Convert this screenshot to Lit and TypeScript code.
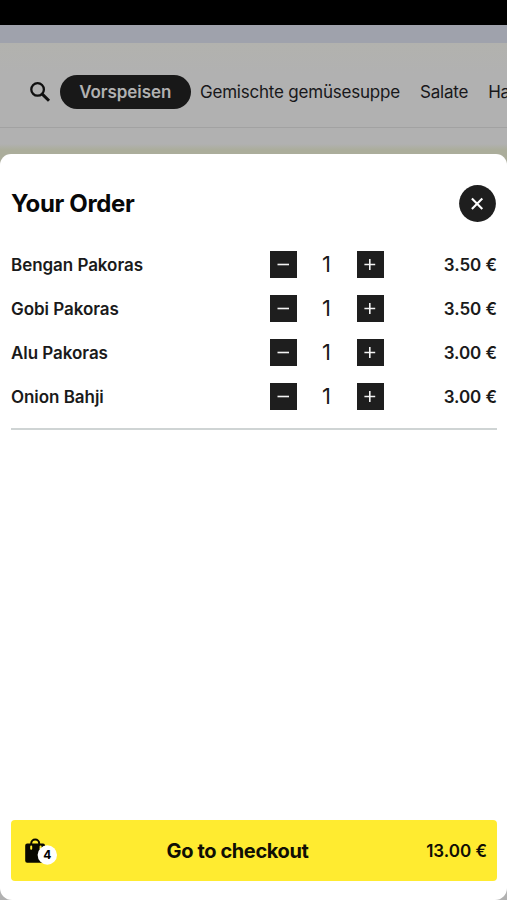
import { LitElement, html, css, svg } from "lit";
import { customElement, property } from "lit/decorators.js";

interface OrderItem {
  name: string;
  count: number;
  price: string;
}

@customElement("category-bar")
export class CategoryBar extends LitElement {
  static styles = css`
    :host {
      display: flex;
      align-items: center;
      box-sizing: border-box;
      height: 85px;
      padding: 14px 0 0 29px;
      overflow: hidden;
      white-space: nowrap;
    }
    .search {
      display: block;
      flex: none;
      width: 22px;
      height: 22px;
      margin-right: 9px;
    }
    .tab {
      flex: none;
      box-sizing: border-box;
      height: 34px;
      padding-top: 1px;
      font-size: 17px;
      line-height: 33px;
      letter-spacing: -0.21px;
      margin-left: 20px;
      color: #18181a;
    }
    .active {
      margin: 0;
      width: 130.500px;
      text-align: center;
      border-radius: 17px;
      background: #181818;
      color: #b1b1b1;
      font-weight: 600;
      letter-spacing: -0.08px;
    }
    .active + .tab {
      margin-left: 9.500px;
    }
  `;

  render() {
    return html`
      <svg class="search" viewBox="0 0 22 22" fill="none" stroke="#101010">
        <circle cx="8.6" cy="8.4" r="6.3" stroke-width="2.3" />
        <path d="M13 12.9 L20 19.8" stroke-width="3" />
      </svg>
      <div class="tab active">Vorspeisen</div>
      <div class="tab">Gemischte gemüsesuppe</div>
      <div class="tab">Salate</div>
      <div class="tab">Hauptgerichte</div>
    `;
  }
}

@customElement("order-row")
export class OrderRow extends LitElement {
  @property({ attribute: false }) item!: OrderItem;

  static styles = css`
    :host {
      display: grid;
      grid-template-columns: 258.5px 27px 60px 27px 1fr;
      align-items: center;
      height: 44px;
      font-size: 17px;
      font-weight: 600;
      letter-spacing: -0.05px;
      color: #1a1a1a;
    }
    .step {
      display: block;
      width: 27px;
      height: 27px;
      background: #1e1e1e;
    }
    .count {
      font-size: 22px;
      font-weight: 400;
      text-align: center;
    }
    .name,
    .price {
      padding-top: 1px;
    }
    .price {
      text-align: right;
    }
  `;

  private step(d: string) {
    return html`<svg class="step" viewBox="0 0 27 27" fill="none" stroke="#f4f4f4" stroke-width="1.6">
      ${svg`<path d=${d} />`}
    </svg>`;
  }

  render() {
    return html`
      <span class="name">${this.item.name}</span>
      ${this.step("M7.5 13.5H19")}
      <span class="count">${this.item.count}</span>
      ${this.step("M7.4 13.5H18.2M12.8 8.1V18.9")}
      <span class="price">${this.item.price}</span>
    `;
  }
}

@customElement("app-root")
export class AppRoot extends LitElement {
  private items: OrderItem[] = [
    { name: "Bengan Pakoras", count: 1, price: "3.50 €" },
    { name: "Gobi Pakoras", count: 1, price: "3.50 €" },
    { name: "Alu Pakoras", count: 1, price: "3.00 €" },
    { name: "Onion Bahji", count: 1, price: "3.00 €" },
  ];

  static styles = css`
    :host {
      display: flex;
      flex-direction: column;
      height: 900px;
      overflow: hidden;
      background: #b1b1b1;
      font-family: Inter, "Liberation Sans", sans-serif;
    }
    .status {
      flex: none;
      height: 25px;
      background: #000;
    }
    .strip {
      flex: none;
      height: 18px;
      background: #9fa2ac;
    }
    category-bar {
      flex: none;
      border-bottom: 1px solid #a2a2a2;
      background: linear-gradient(#b2b2ae, #b1b1b1 30px);
    }
    .gap {
      flex: none;
      height: 26px;
      background: linear-gradient(#b1b1b1 16px, #abad9b 22px);
    }
    .backing {
      flex: 1;
      display: flex;
      background: linear-gradient(#abad9b 6px, #b1b1b1 16px);
    }
    .sheet {
      flex: 1;
      display: flex;
      flex-direction: column;
      box-sizing: border-box;
      padding: 31px 10px 19px 11px;
      border-radius: 11px 11px 12px 12px;
      background: #fff;
    }
    .head {
      display: flex;
      justify-content: space-between;
      align-items: center;
      height: 37px;
      margin-bottom: 20px;
    }
    .title {
      margin: 0;
      font-size: 24px;
      font-weight: 700;
      letter-spacing: -0.35px;
      color: #080808;
    }
    .close {
      display: block;
      width: 37px;
      height: 37px;
      margin-right: 1px;
    }
    .items {
      border-bottom: 2px solid #cfd4d4;
      padding-bottom: 10px;
    }
    .checkout {
      margin-top: auto;
      display: grid;
      grid-template-columns: 82px 1fr 119px;
      align-items: center;
      height: 61px;
      padding: 0 10px 0 14px;
      box-sizing: border-box;
      border-radius: 4px;
      background: #ffeb30;
      color: #100f04;
    }
    .bag {
      display: block;
      width: 34px;
      height: 28px;
      overflow: visible;
    }
    .badge {
      font-size: 12px;
      font-weight: 700;
    }
    .label {
      padding-top: 1px;
      text-align: center;
      font-size: 20px;
      font-weight: 700;
      letter-spacing: -0.38px;
    }
    .total {
      padding-top: 1px;
      text-align: right;
      font-size: 17px;
      font-weight: 600;
    }
  `;

  render() {
    return html`
      <div class="status"></div>
      <div class="strip"></div>
      <category-bar></category-bar>
      <div class="gap"></div>
      <div class="backing">
        <div class="sheet">
          <div class="head">
            <h1 class="title">Your Order</h1>
            <svg class="close" viewBox="0 0 37 37">
              <circle cx="18.5" cy="18.5" r="18.4" fill="#1e1e1e" />
              <path d="M12.9 13.6L23.3 24M23.3 13.6L12.9 24" stroke="#fff" stroke-width="2.1" />
            </svg>
          </div>
          <div class="items">
            ${this.items.map((item) => html`<order-row .item=${item}></order-row>`)}
          </div>
          <div class="checkout">
            <svg class="bag" viewBox="0 0 34 28">
              <path d="M6.2 8V6.6a4 4 0 0 1 8 0V8" fill="none" stroke="#080800" stroke-width="2" />
              <path d="M2.2 6.5H18a2 2 0 0 1 2 2V25.700H2.200a2 2 0 0 1-2-2V8.500a2 2 0 0 1 2-2Z" fill="#080800" />
              <path d="M6.2 9.400v2.400M15.600 9.400v2.400" stroke="#ffeb30" stroke-width="2" stroke-linecap="round" />
              <circle cx="22.3" cy="18" r="9.7" fill="#fff" />
              <text class="badge" x="22.3" y="22.4" text-anchor="middle">4</text>
            </svg>
            <span class="label">Go to checkout</span>
            <span class="total">13.00 €</span>
          </div>
        </div>
      </div>
    `;
  }
}
